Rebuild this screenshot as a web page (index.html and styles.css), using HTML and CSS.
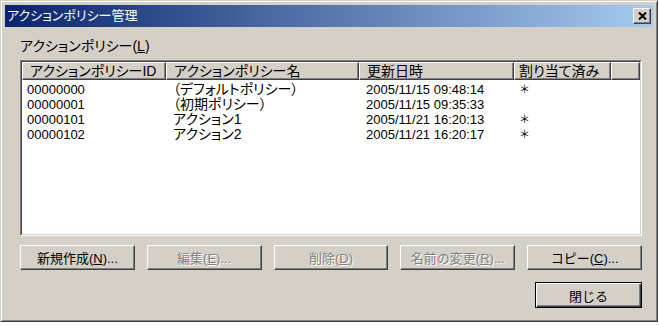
FILE: index.html
```html
<!DOCTYPE html>
<html lang="ja">
<head>
    <meta charset="UTF-8">
    <title>アクションポリシー管理</title>
    <link rel="stylesheet" href="styles.css">
</head>
<body>
    <div class="window">
        <div class="titlebar">
            <span class="title">アクションポリシー管理</span>
            <button class="close-btn">
                <svg width="9" height="8" viewBox="0 0 9 8"><path d="M1 0.5 L8 7.5 M8 0.5 L1 7.5" stroke="#000" stroke-width="2"/></svg>
            </button>
        </div>

        <div class="content">
            <div class="list-label">アクションポリシー(<u>L</u>)</div>

            <div class="listview">
                <div class="listview-inner">
                    <div class="lv-header">
                        <div class="lv-head">アクションポリシーID</div>
                        <div class="lv-head">アクションポリシー名</div>
                        <div class="lv-head">更新日時</div>
                        <div class="lv-head">割り当て済み</div>
                        <div class="lv-head"></div>
                    </div>
                    <div class="lv-body">
                        <div class="lv-row">
                            <span class="cell first">00000000</span>
                            <span class="cell name">（デフォルトポリシー）</span>
                            <span class="cell">2005/11/15 09:48:14</span>
                            <span class="cell star">＊</span>
                        </div>
                        <div class="lv-row">
                            <span class="cell first">00000001</span>
                            <span class="cell name">（初期ポリシー）</span>
                            <span class="cell">2005/11/15 09:35:33</span>
                            <span class="cell star"></span>
                        </div>
                        <div class="lv-row">
                            <span class="cell first">00000101</span>
                            <span class="cell name">アクション1</span>
                            <span class="cell">2005/11/21 16:20:13</span>
                            <span class="cell star">＊</span>
                        </div>
                        <div class="lv-row">
                            <span class="cell first">00000102</span>
                            <span class="cell name">アクション2</span>
                            <span class="cell">2005/11/21 16:20:17</span>
                            <span class="cell star">＊</span>
                        </div>
                    </div>
                </div>
            </div>

            <div class="actions">
                <button class="btn">新規作成(<u>N</u>)...</button>
                <button class="btn disabled">編集(<u>E</u>)...</button>
                <button class="btn disabled">削除(<u>D</u>)</button>
                <button class="btn disabled">名前の変更(<u>R</u>)...</button>
                <button class="btn">コピー(<u>C</u>)...</button>
            </div>

            <div class="footer">
                <button class="btn default">閉じる</button>
            </div>
        </div>
    </div>
</body>
</html>
```

FILE: styles.css
```css
* {
    margin: 0;
    padding: 0;
    box-sizing: border-box;
}
body {
    font-family: 'Liberation Sans', 'Noto Sans CJK JP', sans-serif;
    font-size: 13px;
    font-feature-settings: "palt" 1;
    background: #ffffff;
    color: #000000;
}
.window {
    width: 658px;
    height: 322px;
    background: #d4d0c8;
    border: 1px solid;
    border-color: #d4d0c8 #404040 #404040 #d4d0c8;
    box-shadow: inset 1px 1px #ffffff, inset -1px -1px #808080;
    padding: 4px;
}
.titlebar {
    height: 22px;
    background: linear-gradient(90deg, #0a246a 0%, #a6caf0 100%);
    display: flex;
    align-items: center;
    justify-content: space-between;
    padding: 0 2px 0 2px;
}
.title {
    color: #ffffff;
    font-size: 13px;
    line-height: 22px;
}
.close-btn {
    width: 18px;
    height: 16px;
    background: #d4d0c8;
    border: 1px solid;
    border-color: #ffffff #404040 #404040 #ffffff;
    box-shadow: inset -1px -1px #808080;
    display: flex;
    align-items: center;
    justify-content: center;
}
.content {
    padding: 11px 11px 0 15px;
}
.list-label {
    height: 16px;
    line-height: 16px;
    font-size: 14px;
}
u {
    text-decoration: underline;
    text-underline-offset: 1px;
}
.listview {
    margin-top: 6px;
    height: 176px;
    border: 1px solid;
    border-color: #808080 #ffffff #ffffff #808080;
}
.listview-inner {
    height: 100%;
    border: 1px solid;
    border-color: #404040 #d4d0c8 #d4d0c8 #404040;
    background: #ffffff;
}
.lv-header,
.lv-row {
    display: grid;
    grid-template-columns: 144px 193px 155px 97px 1fr;
}
.lv-head {
    height: 18px;
    line-height: 16px;
    padding-left: 7px;
    font-size: 14px;
    background: #d4d0c8;
    border: 1px solid;
    border-color: #ffffff #404040 #404040 #ffffff;
    box-shadow: inset -1px -1px #808080;
    white-space: nowrap;
    overflow: hidden;
}
.lv-head:nth-child(4) {
    padding-left: 4px;
}
.lv-body {
    padding-top: 2px;
}
.lv-row {
    height: 15px;
    line-height: 15px;
}
.cell {
    padding-left: 7px;
    white-space: nowrap;
}
.cell.first {
    padding-left: 5px;
}
.cell.name {
    font-size: 14px;
}
.cell.star {
    padding-left: 6px;
    font-size: 11px;
}
.actions {
    margin-top: 9px;
    display: grid;
    grid-template-columns: repeat(5, 1fr);
    gap: 12px;
}
.btn {
    height: 25px;
    font-family: inherit;
    font-size: 13px;
    background: #d4d0c8;
    color: #000000;
    border: 1px solid;
    border-color: #ffffff #404040 #404040 #ffffff;
    box-shadow: inset -1px -1px #808080;
}
.btn.disabled {
    color: #808080;
    text-shadow: 1px 1px 0 #ffffff;
}
.footer {
    margin-top: 12px;
    display: flex;
    justify-content: flex-end;
}
.btn.default {
    width: 107px;
    height: 26px;
    border: 1px solid #000000;
    box-shadow: inset 1px 1px #ffffff, inset -1px -1px #404040, inset -2px -2px #808080;
}
```
